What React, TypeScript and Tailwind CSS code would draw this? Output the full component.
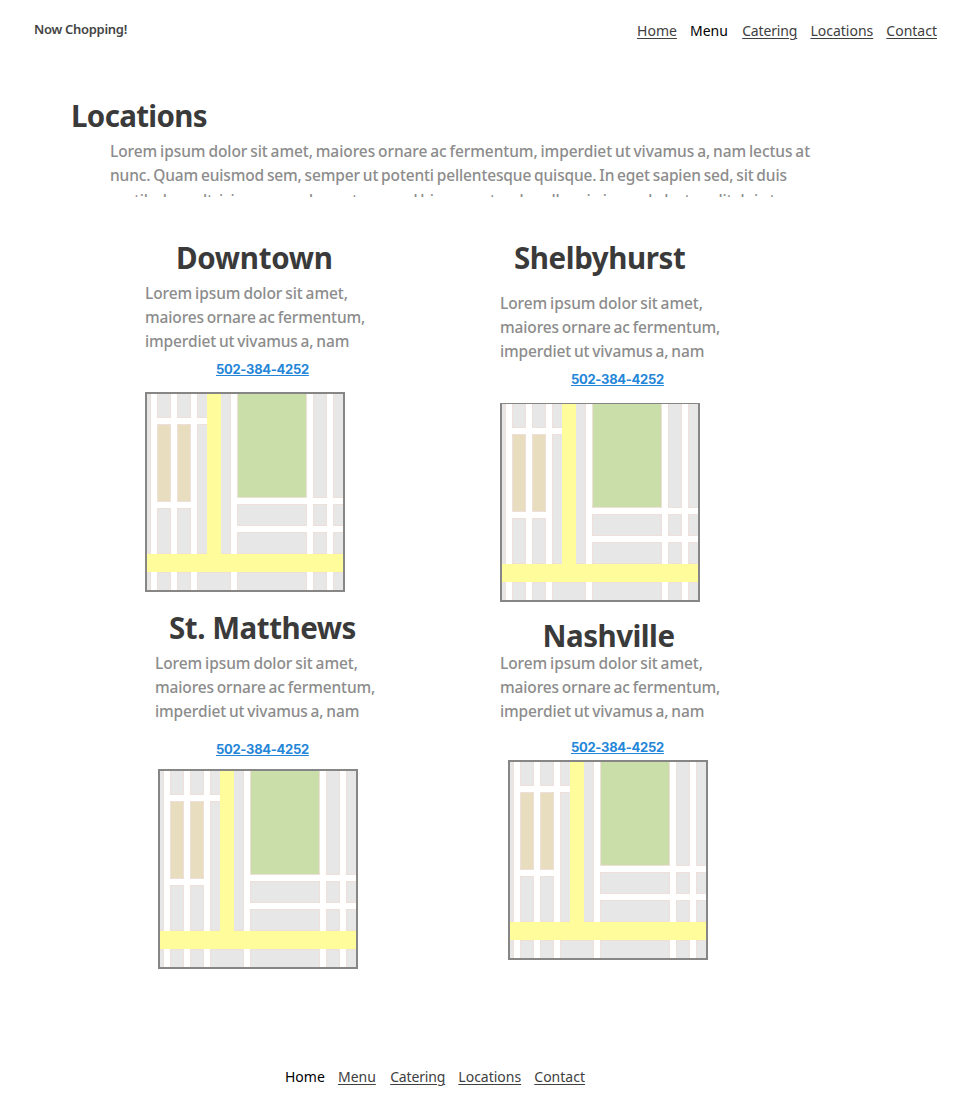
type NavProps = { active: string };

const LINKS = ["Home", "Menu", "Catering", "Locations", "Contact"];

function Nav({ active }: NavProps) {
  return (
    <nav className="flex gap-[13.1px] text-sm leading-5">
      {LINKS.map((label) => (
        <a
          key={label}
          href="#"
          className={`${label === "Catering" ? "ml-[1.2px] tracking-[-0.15px]" : ""} ${
            label === active
              ? "text-black"
              : "text-[#404040] underline decoration-1 underline-offset-2"
          }`}
        >
          {label}
        </a>
      ))}
    </nav>
  );
}

type Block = [x: number, y: number, w: number, h: number];

const BLOCKS: Block[] = [
  [-1, -1, 5, 161],
  [10, -1, 14, 25],
  [30, -1, 14, 25],
  [50, -1, 14, 25],
  [10, 114, 14, 46],
  [30, 114, 14, 46],
  [50, 30, 14, 130],
  [73, -1, 11, 161],
  [90, 110, 70, 22],
  [90, 138, 70, 22],
  [166, -1, 14, 105],
  [166, 110, 14, 22],
  [166, 138, 14, 22],
  [186, -1, 14, 105],
  [186, 110, 14, 22],
  [186, 138, 14, 22],
  [-1, 178, 5, 20],
  [10, 178, 14, 20],
  [30, 178, 14, 20],
  [50, 178, 34, 20],
  [90, 178, 70, 20],
  [166, 178, 14, 20],
  [186, 178, 14, 20],
];

function Plot({ block: [x, y, w, h], fill }: { block: Block; fill: string }) {
  return <rect x={x + 0.5} y={y + 0.5} width={w - 1} height={h - 1} fill={fill} stroke="#eedfd8" />;
}

function StreetMap({ className }: { className: string }) {
  return (
    <div className={`box-border w-[200px] shrink-0 overflow-hidden border-2 border-[#868686] ${className}`}>
      <svg width="196" height="196" viewBox="0 0 196 196" className="block">
        <rect width="196" height="196" fill="#ffffff" />
        {BLOCKS.map((b) => (
          <Plot key={b.join()} block={b} fill="#e7e7e7" />
        ))}
        <Plot block={[10, 30, 14, 78]} fill="#e8ddbf" />
        <Plot block={[30, 30, 14, 78]} fill="#e8ddbf" />
        <Plot block={[90, -1, 70, 105]} fill="#cadeaa" />
        <rect x="60" y="0" width="14" height="162" fill="#fffc9b" />
        <rect x="0" y="160" width="196" height="18" fill="#fffc9b" />
      </svg>
    </div>
  );
}

type LocationProps = {
  name: string;
  section: string;
  heading: string;
  copy: string;
  phone: string;
  map: string;
};

function Location({ name, section, heading, copy, phone, map }: LocationProps) {
  return (
    <section className={`flex flex-col items-start ${section}`}>
      <h2 className={`whitespace-nowrap text-[29.5px] font-bold leading-9 text-[#3a3a3a] ${heading}`}>{name}</h2>
      <p className={`whitespace-nowrap text-[15.5px] font-medium leading-6 text-[#8c8c8c] [word-spacing:-1px] ${copy}`}>
        <span className="block tracking-[-0.08px]">Lorem ipsum dolor sit amet,</span>
        <span className="block tracking-[-0.14px]">maiores ornare ac fermentum,</span>
        <span className="block tracking-[-0.13px]">imperdiet ut vivamus a, nam</span>
      </p>
      <a
        href="#"
        className={`ml-[71px] font-['Inter',sans-serif] text-[13px] font-bold leading-5 tracking-[-0.3px] text-[#2486d8] underline decoration-1 underline-offset-1 ${phone}`}
      >
        502-384-4252
      </a>
      <StreetMap className={map} />
    </section>
  );
}

export default function App() {
  return (
    <div className="h-[1116px] w-[960px] overflow-hidden bg-white font-['Noto_Sans',sans-serif]">
      <header className="flex h-[98px] items-start justify-between pl-[34px] pr-[23px]">
        <div className="mt-[19px] text-[13px] font-semibold leading-5 tracking-[-0.3px] text-[#444444]">
          Now Chopping!
        </div>
        <div className="mt-[21px]">
          <Nav active="Menu" />
        </div>
      </header>

      <main className="h-[969px]">
        <h1 className="ml-[71px] text-[29.5px] font-bold leading-9 tracking-[-0.65px] text-[#3a3a3a]">Locations</h1>
        <p className="ml-[110px] mt-[5px] h-[58px] w-[720px] overflow-hidden whitespace-nowrap text-[15.5px] font-medium leading-6 text-[#8c8c8c] [word-spacing:-1px]">
          <span className="block tracking-[-0.08px]">
            Lorem ipsum dolor sit amet, maiores ornare ac fermentum, imperdiet ut vivamus a, nam lectus at
          </span>
          <span className="block tracking-[-0.14px]">
            nunc. Quam euismod sem, semper ut potenti pellentesque quisque. In eget sapien sed, sit duis
          </span>
          <span className="block pt-px tracking-[-0.2px]">
            vestibulum ultricies a nunc do eget nunc ad him nunc tor de vellum in in modo lectus elit dui at
          </span>
        </p>

        <div className="mt-[43px] flex">
          <div className="w-[355px] shrink-0 pl-[145px]">
            <Location
              name="Downtown"
              section="h-[370px]"
              heading="ml-[31px] tracking-[-0.3px]"
              copy="mt-[5px]"
              phone="mt-[6px]"
              map="mt-[13px] h-[200px]"
            />
            <Location
              name="St. Matthews"
              section=""
              heading="ml-[24px] tracking-[-0.45px]"
              copy="ml-[10px] mt-[5px]"
              phone="mt-[16px]"
              map="ml-[13px] mt-[10px] h-[200px]"
            />
          </div>
          <div className="pl-[145px]">
            <Location
              name="Shelbyhurst"
              section="h-[378px]"
              heading="ml-[14px] tracking-[-0.42px]"
              copy="mt-[15px]"
              phone="mt-[6px]"
              map="mt-[14px] h-[199px] border-t"
            />
            <Location
              name="Nashville"
              section=""
              heading="ml-[42.5px] tracking-[-0.5px]"
              copy="-mt-[3px]"
              phone="mt-[14px]"
              map="ml-[8px] mt-[3px] h-[200px]"
            />
          </div>
        </div>
      </main>

      <footer className="pl-[285px]">
        <Nav active="Home" />
      </footer>
    </div>
  );
}
